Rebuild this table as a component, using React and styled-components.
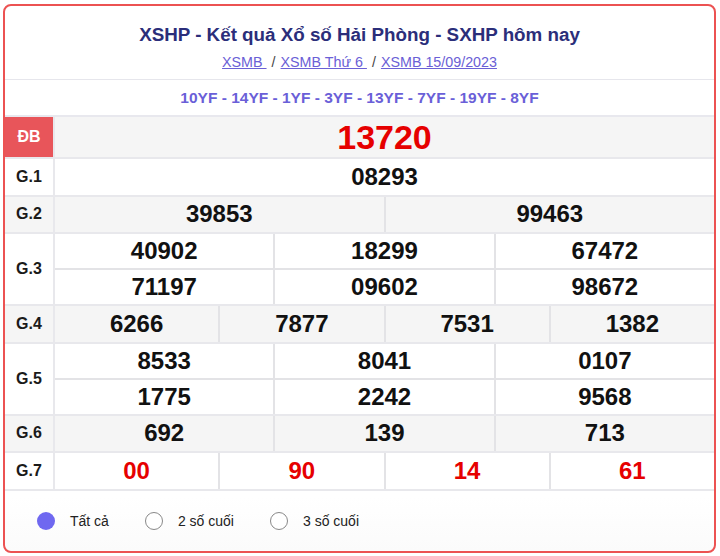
import styled, { createGlobalStyle } from 'styled-components';

const GlobalStyle = createGlobalStyle`
  html, body {
    margin: 0;
    padding: 0;
    background: #fff;
    font-family: "Liberation Sans", Arial, sans-serif;
  }
`;

// dữ liệu kết quả
const rows = [
  { label: 'G.1', cols: 1, nums: ['08293'] },
  { label: 'G.2', cols: 2, nums: ['39853', '99463'], alt: true },
  { label: 'G.3', cols: 3, nums: ['40902', '18299', '67472', '71197', '09602', '98672'] },
  { label: 'G.4', cols: 4, nums: ['6266', '7877', '7531', '1382'], alt: true },
  { label: 'G.5', cols: 3, nums: ['8533', '8041', '0107', '1775', '2242', '9568'] },
  { label: 'G.6', cols: 3, nums: ['692', '139', '713'], alt: true },
  { label: 'G.7', cols: 4, nums: ['00', '90', '14', '61'], red: true },
];

const Card = styled.div`
  margin: 4px 4px 3px 3px;
  border: 2px solid #ec5252;
  border-radius: 8px;
  overflow: hidden;
  height: 549px;
  box-sizing: border-box;
  background: linear-gradient(#fff 90%, #fbfbfb);
  display: flex;
  flex-direction: column;
`;

const Header = styled.div`
  padding: 17px 0 7px;
  text-align: center;
  border-bottom: 1px solid #e6e6ec;
`;

const Title = styled.h1`
  margin: 0;
  font-size: 18.8px;
  line-height: 24px;
  font-weight: bold;
  color: #2b2e7a;
`;

const Crumbs = styled.div`
  margin-top: 5px;
  font-size: 14.3px;
  line-height: 20px;
  color: #444;
`;

const Crumb = styled.a`
  color: #6a60d6;
  text-decoration: underline;
`;

const Sep = styled.span`
  margin: 0 5px;
`;

const Codes = styled.div`
  height: 35px;
  display: flex;
  align-items: center;
  justify-content: center;
  font-size: 15.5px;
  font-weight: bold;
  color: #6a5fd8;
  border-bottom: 2px solid #e8e8ee;
`;

const Row = styled.div`
  display: flex;
  border-bottom: 2px solid #e8e8ec;
  background: ${p => (p.$alt ? '#f5f5f5' : '#fff')};
`;

const Label = styled.div`
  width: 48px;
  flex-shrink: 0;
  display: flex;
  align-items: center;
  justify-content: center;
  font-size: 16px;
  font-weight: bold;
  color: ${p => (p.$special ? '#fff' : '#1a1a1a')};
  background: ${p => (p.$special ? '#e8555a' : 'transparent')};
  border-right: 2px solid #e8e8ec;
`;

const Cells = styled.div`
  flex: 1;
  display: grid;
  grid-template-columns: repeat(${p => p.$cols}, 1fr);
  gap: 2px;
  background: #e3e3e6;
`;

const Cell = styled.div`
  height: ${p => (p.$big ? '40px' : p.$half ? '34px' : '35.5px')};
  display: flex;
  align-items: center;
  justify-content: center;
  background: ${p => (p.$alt ? '#f5f5f5' : '#fff')};
  font-size: ${p => (p.$big ? '34px' : '24px')};
  font-weight: bold;
  color: ${p => (p.$red ? '#e60000' : '#111')};
`;

const Filter = styled.div`
  flex: 1;
  display: flex;
  align-items: center;
  padding-left: 32px;
  gap: 36px;
`;

const Option = styled.label`
  display: flex;
  align-items: center;
  gap: 15px;
  font-size: 14px;
  color: #222;
`;

const Dot = styled.span`
  width: 18px;
  height: 18px;
  border-radius: 50%;
  box-sizing: border-box;
  background: ${p => (p.$on ? '#6f68f0' : '#fff')};
  border: ${p => (p.$on ? 'none' : '1.5px solid #888')};
`;

export default function App() {
  return (
    <>
      <GlobalStyle />
      <Card>
        <Header>
          <Title>XSHP - Kết quả Xổ số Hải Phòng - SXHP hôm nay</Title>
          <Crumbs>
            <Crumb>XSMB </Crumb>
            <Sep>/</Sep>
            <Crumb>XSMB Thứ 6 </Crumb>
            <Sep>/</Sep>
            <Crumb>XSMB 15/09/2023</Crumb>
          </Crumbs>
        </Header>
        <Codes>10YF - 14YF - 1YF - 3YF - 13YF - 7YF - 19YF - 8YF</Codes>

        <Row $alt>
          <Label $special>ĐB</Label>
          <Cells $cols={1}>
            <Cell $big $red $alt>13720</Cell>
          </Cells>
        </Row>

        {rows.map(r => (
          <Row key={r.label} $alt={r.alt}>
            <Label>{r.label}</Label>
            <Cells $cols={r.cols}>
              {r.nums.map((n, i) => (
                <Cell key={i} $alt={r.alt} $red={r.red} $half={r.nums.length > r.cols}>{n}</Cell>
              ))}
            </Cells>
          </Row>
        ))}

        <Filter>
          <Option><Dot $on />Tất cả</Option>
          <Option><Dot />2 số cuối</Option>
          <Option><Dot />3 số cuối</Option>
        </Filter>
      </Card>
    </>
  );
}
